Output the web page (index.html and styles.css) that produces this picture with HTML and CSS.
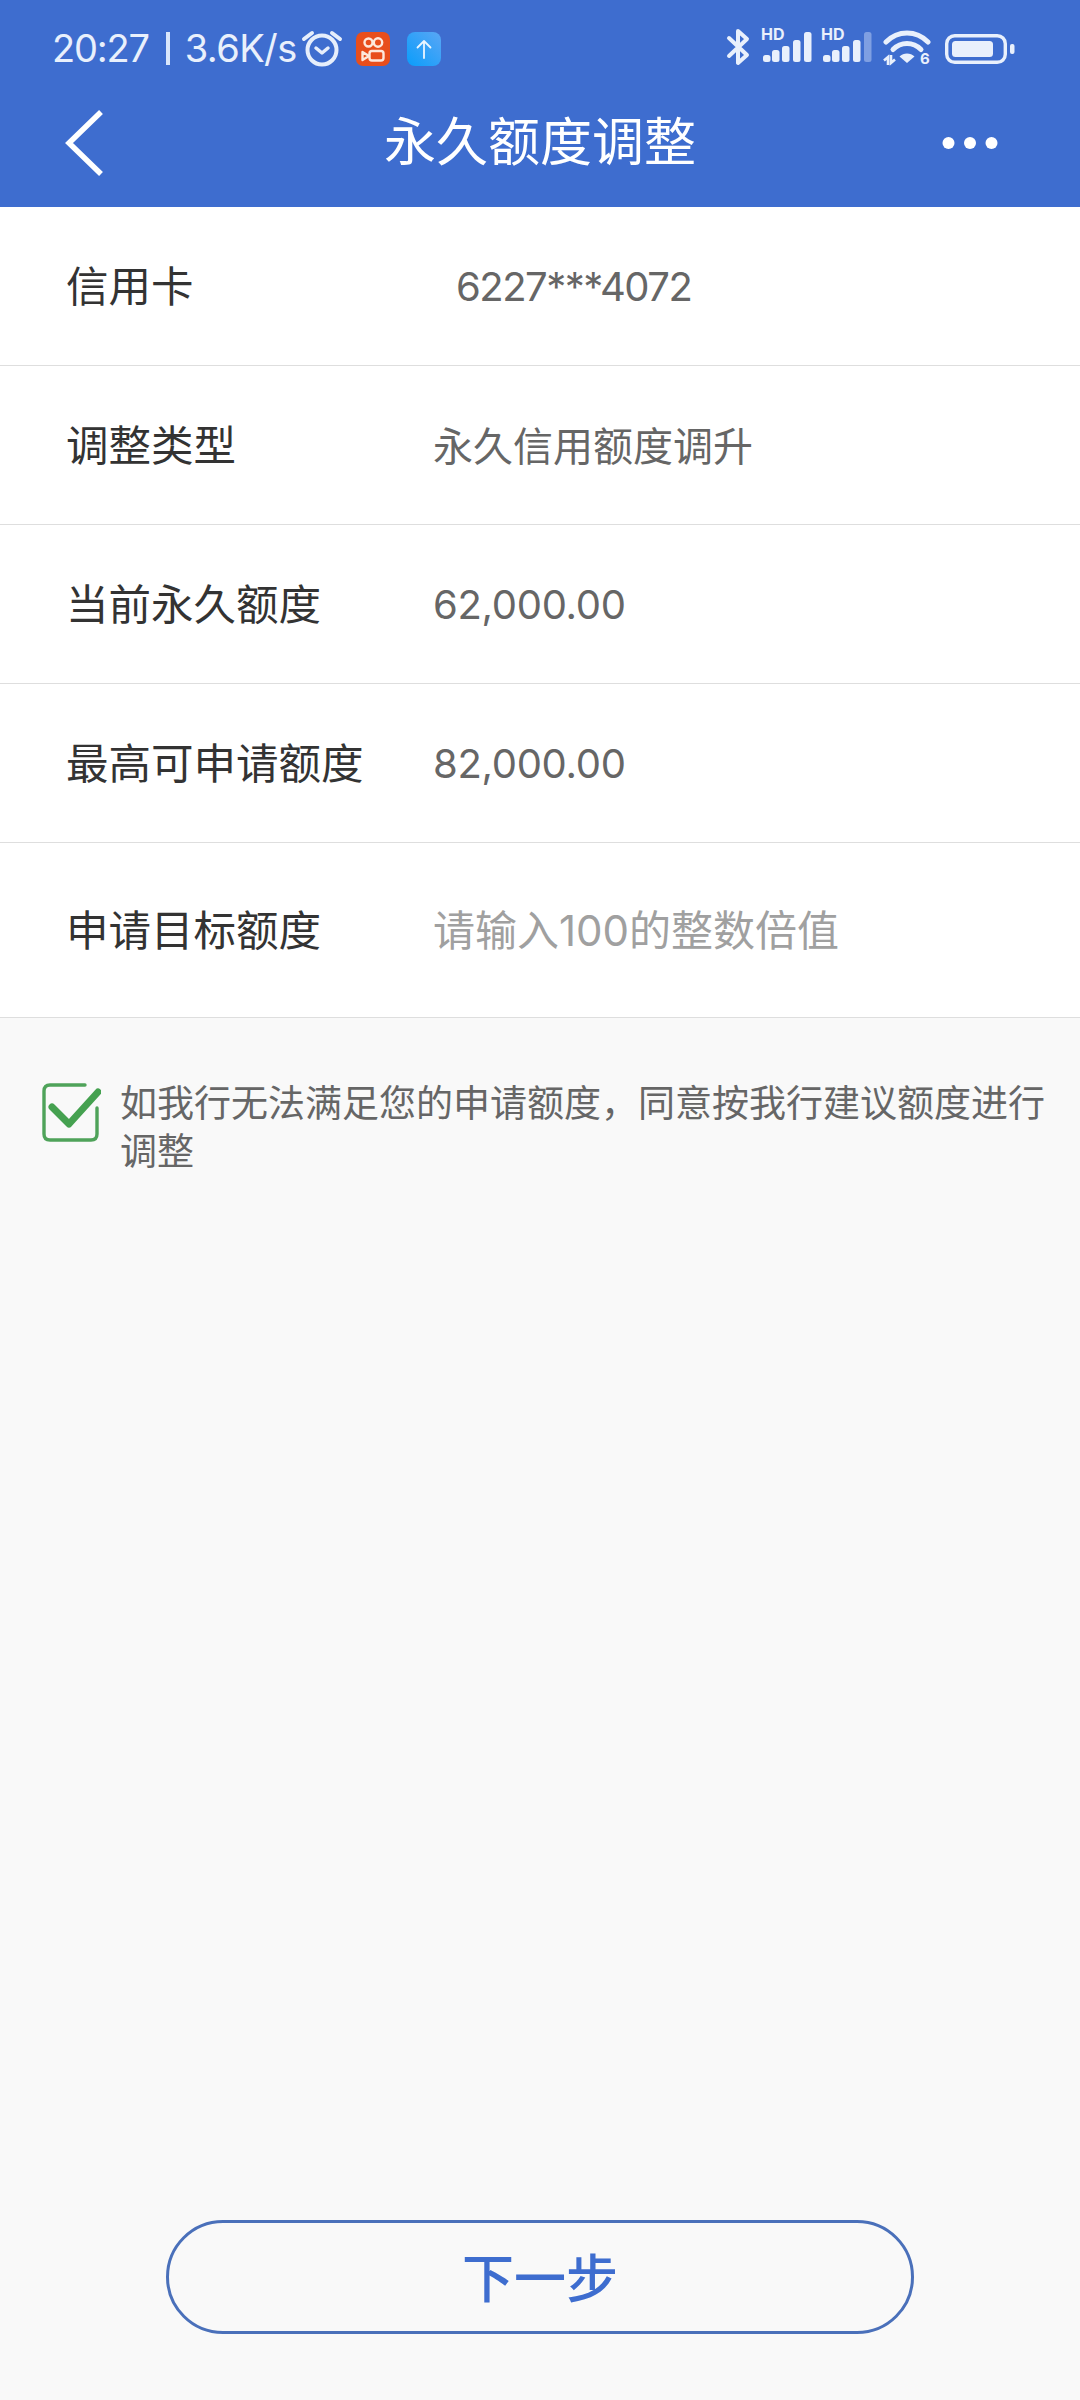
FILE: index.html
```html
<!DOCTYPE html>
<html lang="zh-CN">
<head>
<meta charset="utf-8">
<title>永久额度调整</title>
<link rel="stylesheet" href="styles.css">
</head>
<body>
<div class="page">
  <header class="appbar">
    <div class="status">
      <span class="status-time">20:27</span>
      <span class="status-bar"></span>
      <span class="status-text">3.6K/s</span>
      <svg class="ic-alarm" viewBox="0 0 42 40" width="42" height="40"><circle cx="21" cy="22" r="14.5" fill="none" stroke="#e6eefb" stroke-width="4"/><path d="M3 11 L11 5 M31 5 L39 11" fill="none" stroke="#e6eefb" stroke-width="4" stroke-linecap="round"/><path d="M15 20 L21 25 L27 20" fill="none" stroke="#e6eefb" stroke-width="3.5" stroke-linecap="round" stroke-linejoin="round"/></svg>
      <svg class="ic-app" viewBox="0 0 34 34" width="34" height="34"><rect width="34" height="34" rx="7" fill="#e84e1c"/><g fill="none" stroke="#fde8dc" stroke-width="2.4"><circle cx="12.5" cy="10.5" r="4"/><circle cx="22" cy="10.5" r="4.2"/><rect x="13.5" y="19" width="14" height="9.5" rx="2.5"/><path d="M6.5 20 L13 24 L6.5 28 Z" stroke-linejoin="round"/></g></svg>
      <svg class="ic-app ic-app-b" viewBox="0 0 34 34" width="34" height="34"><defs><linearGradient id="up" x1="0" y1="1" x2="1" y2="0"><stop offset="0" stop-color="#0a9dfb"/><stop offset="1" stop-color="#5aa6f5"/></linearGradient></defs><rect width="34" height="34" rx="8" fill="url(#up)"/><path d="M17 26 V9 M10.5 15.5 L17 9 L23.5 15.5" fill="none" stroke="#eaf6ff" stroke-width="1.8" stroke-linecap="round" stroke-linejoin="round"/></svg>
      <span class="status-space"></span>
      <svg class="ic-bt" viewBox="0 0 28 38" width="28" height="38"><path d="M4 10 L22 27 L13 35 V3 L22 11 L4 28" fill="none" stroke="#e9f0fc" stroke-width="4" stroke-linejoin="round" stroke-linecap="round"/></svg>
      <svg class="ic-signal" viewBox="0 -6 51 44" width="51" height="44"><text class="hd" x="0" y="12">HD</text><rect x="2" y="27" width="7.5" height="7" rx="2.5" fill="#e9f0fc"/><rect x="11" y="22" width="7.5" height="12" rx="2.5" fill="#e9f0fc"/><rect x="21" y="18" width="7.5" height="16" rx="2.5" fill="#e9f0fc"/><rect x="32" y="12" width="7.5" height="22" rx="2.5" fill="#e9f0fc"/><rect x="43" y="4" width="7.5" height="30" rx="2.5" fill="#e9f0fc"/></svg>
      <svg class="ic-signal" viewBox="0 -6 51 44" width="51" height="44"><text class="hd" x="0" y="12">HD</text><rect x="2" y="27" width="7.5" height="7" rx="2.5" fill="#e9f0fc"/><rect x="11" y="22" width="7.5" height="12" rx="2.5" fill="#e9f0fc"/><rect x="21" y="18" width="7.5" height="16" rx="2.5" fill="#e9f0fc"/><rect x="32" y="12" width="7.5" height="22" rx="2.5" fill="#e9f0fc"/><rect x="43" y="4" width="7.5" height="30" rx="2.5" fill="#7f9fe2"/></svg>
      <svg class="ic-wifi" viewBox="0 0 48 42" width="48" height="42"><g fill="none" stroke="#e9f0fc" stroke-width="5" stroke-linecap="round"><path d="M3 12 C15 0 33 0 45 12"/><path d="M10 19.5 C18 11.5 30 11.5 38 19.5"/></g><path d="M24 33 L16.5 26.5 C20.5 22.5 27.5 22.5 31.5 26.5 Z" fill="#e9f0fc"/><path d="M5 35 V27 L1 30.5 M8 25 V33 L12 29.5" fill="none" stroke="#e9f0fc" stroke-width="2.6"/><text class="six" x="37" y="34">6</text></svg>
      <svg class="ic-batt" viewBox="0 0 70 30" width="70" height="30"><rect x="1.7" y="1.7" width="58.6" height="26.6" rx="8" fill="none" stroke="#e9f0fc" stroke-width="3.4"/><rect x="7" y="7" width="41" height="16" rx="3.5" fill="#e9f0fc"/><rect x="65" y="10" width="4.5" height="10" rx="2" fill="#e9f0fc"/></svg>
    </div>
    <nav class="nav">
      <div class="nav-side">
        <svg class="ic-back" viewBox="0 0 46 70" width="46" height="70"><path d="M41 4 L9 35 L41 66" fill="none" stroke="#fff" stroke-width="5.5"/></svg>
      </div>
      <h1 class="title">永久额度调整</h1>
      <div class="nav-side nav-side-end">
        <svg class="ic-more" viewBox="0 0 56 14" width="56" height="14"><circle cx="6.5" cy="7" r="6" fill="#fff"/><circle cx="28" cy="7" r="6" fill="#fff"/><circle cx="49.5" cy="7" r="6" fill="#fff"/></svg>
      </div>
    </nav>
  </header>

  <main class="form">
    <div class="row"><span class="label">信用卡</span><span class="value value-card">6227***4072</span></div>
    <div class="row"><span class="label">调整类型</span><span class="value value-cjk">永久信用额度调升</span></div>
    <div class="row"><span class="label">当前永久额度</span><span class="value">62,000.00</span></div>
    <div class="row"><span class="label">最高可申请额度</span><span class="value">82,000.00</span></div>
    <div class="row row-tall"><span class="label">申请目标额度</span><span class="value value-hint">请输入100的整数倍值</span></div>
  </main>

  <section class="agree">
    <svg class="ic-check" viewBox="0 0 60 60" width="60" height="60"><path d="M44 3 H9 Q3 3 3 9 V52 Q3 58 9 58 H50 Q56 58 56 52 V26" fill="none" stroke="#4fa35a" stroke-width="3.4" stroke-linecap="round"/><path d="M11 25 L28 42 L57 10" fill="none" stroke="#45a150" stroke-width="7" stroke-linecap="round" stroke-linejoin="round"/></svg>
    <p class="agree-text">如我行无法满足您的申请额度，同意按我行建议额度进行调整</p>
  </section>

  <footer class="actions">
    <button class="next" type="button">下一步</button>
  </footer>
</div>
</body>
</html>
```

FILE: styles.css
```css
* { box-sizing: border-box; }
html, body { margin: 0; padding: 0; }
body {
  font-family: "Inter", "Noto Sans CJK SC", sans-serif;
  background: #f9f9f9;
}
.page {
  width: 1080px;
  height: 2400px;
  display: flex;
  flex-direction: column;
  overflow: hidden;
}
.appbar {
  height: 207px;
  background: #3e6dcf;
  flex: none;
}
.status {
  height: 96px;
  padding: 0 65px 0 52px;
  display: flex;
  align-items: center;
  color: #e9f0fc;
}
.status-time {
  font-size: 38px;
  letter-spacing: -1.2px;
  white-space: nowrap;
}
.status-bar {
  width: 4px;
  height: 33px;
  margin: 0 15px 0 17px;
  background: #d9e6fb;
}
.status-text {
  font-size: 38px;
  letter-spacing: -0.6px;
  white-space: nowrap;
}
.ic-alarm { margin-left: 4px; }
.ic-app { margin-left: 13px; margin-top: 2px; }
.ic-app-b { margin-left: 17px; }
.status-space { flex: 1; }
.ic-bt { margin-right: 8px; margin-top: -2px; }
.ic-signal { margin: -8px 9px 0 0; }
.ic-wifi { margin: 6px 14px 0 2px; }
.ic-batt { margin-top: 1px; }
.hd { font: 700 16px "Inter", sans-serif; fill: #e9f0fc; }
.six { font: 700 15px "Inter", sans-serif; fill: #e9f0fc; }
.nav {
  height: 111px;
  padding: 0 82px 17px 60px;
  display: flex;
  align-items: center;
}
.nav-side {
  flex: 1 1 0;
  display: flex;
}
.nav-side-end { justify-content: flex-end; }
.title {
  margin: 0 0 0 22px;
  font-size: 52px;
  font-weight: 400;
  color: #fff;
  line-height: 70px;
}
.form { background: #fff; flex: none; }
.row {
  height: 159px;
  padding-left: 66px;
  display: flex;
  align-items: center;
  border-bottom: 1.5px solid #dedede;
}
.row-tall { height: 175px; }
.label {
  width: 367px;
  flex: none;
  font-size: 42.5px;
  color: #333;
  margin-bottom: 6px;
}
.value {
  font-size: 40px;
  color: #666;
  letter-spacing: -0.3px;
}
.value-card { padding-left: 23px; letter-spacing: -1.5px; }
.value-cjk { letter-spacing: 0; margin-bottom: 3px; }
.value-hint { font-size: 42px; color: #a0a0a0; letter-spacing: 0; margin-bottom: 6px; }
.agree {
  flex: 1;
  padding: 64px 30px 0 41px;
  display: flex;
  align-items: flex-start;
}
.ic-check { flex: none; margin-right: 19px; }
.agree-text {
  margin: -2px 0 0;
  font-size: 37px;
  line-height: 48px;
  color: #666;
}
.actions {
  flex: none;
  display: flex;
  justify-content: center;
  padding-bottom: 66px;
}
.next {
  width: 748px;
  height: 114px;
  border: 3px solid #4a70ba;
  border-radius: 57px;
  background: transparent;
  color: #3e6dcf;
  font: 500 52px "Noto Sans CJK SC", sans-serif;
  padding: 0 0 4px;
}
```
